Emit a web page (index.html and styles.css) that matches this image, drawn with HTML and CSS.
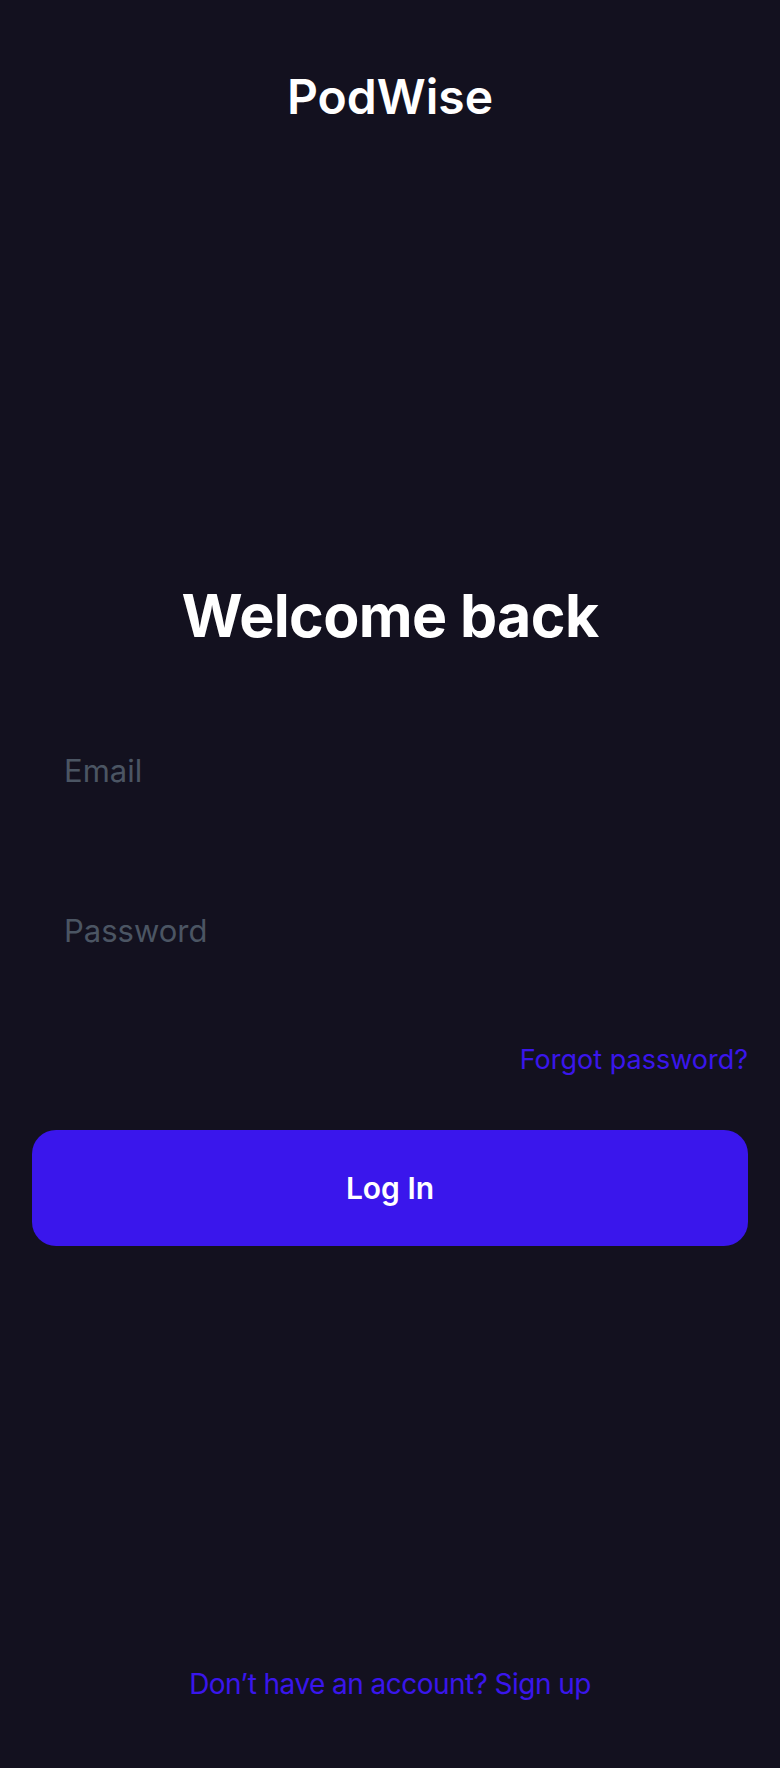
FILE: index.html
```html
<!DOCTYPE html>
<html lang="en">
<head>
<meta charset="utf-8">
<title>PodWise – Log in</title>
<link rel="stylesheet" href="styles.css">
</head>
<body>
<main class="screen">
  <header class="brand">PodWise</header>
  <h1 class="title">Welcome back</h1>
  <form class="form">
    <input class="field field-email" type="email" placeholder="Email">
    <input class="field field-password" type="password" placeholder="Password">
    <a class="forgot" href="#">Forgot password?</a>
    <button class="login" type="button">Log In</button>
  </form>
  <a class="signup" href="#">Don’t have an account? Sign up</a>
</main>
</body>
</html>
```

FILE: styles.css
```css
html, body {
  margin: 0;
  padding: 0;
  background: #13111f;
}

body {
  font-family: Inter, "Noto Sans", "Liberation Sans", sans-serif;
  color: #ffffff;
}

.screen {
  box-sizing: border-box;
  min-height: 1768px;
  display: flex;
  flex-direction: column;
  padding: 0 32px 70px;
}

.brand {
  margin-top: 73px;
  text-align: center;
  font-size: 48px;
  line-height: 1;
  font-weight: 600;
  letter-spacing: 0;
}

.title {
  margin: 465px 0 0;
  text-align: center;
  font-size: 59px;
  line-height: 1;
  font-weight: 700;
  letter-spacing: -0.6px;
}

.form {
  display: flex;
  flex-direction: column;
  margin-top: 85px;
}

.field {
  box-sizing: border-box;
  height: 80px;
  padding: 0 32px;
  border: none;
  outline: none;
  background: transparent;
  font-family: Inter, "Noto Sans", "Liberation Sans", sans-serif;
  font-size: 31px;
  color: #ffffff;
}

.field::placeholder {
  color: #4b5563;
}

.field-password {
  margin-top: 80px;
}

.forgot {
  align-self: flex-end;
  margin-top: 76px;
  font-size: 27px;
  line-height: 1;
  letter-spacing: 0;
  color: #3a16ec;
  text-decoration: none;
}

.login {
  margin-top: 57px;
  height: 116px;
  border: none;
  border-radius: 24px;
  background: #3a16ec;
  color: #ffffff;
  font-family: Inter, "Noto Sans", "Liberation Sans", sans-serif;
  font-size: 30px;
  font-weight: 600;
  cursor: pointer;
}

.signup {
  margin-top: auto;
  align-self: center;
  font-size: 28px;
  line-height: 1;
  letter-spacing: -0.55px;
  color: #3a16ec;
  text-decoration: none;
}
```
